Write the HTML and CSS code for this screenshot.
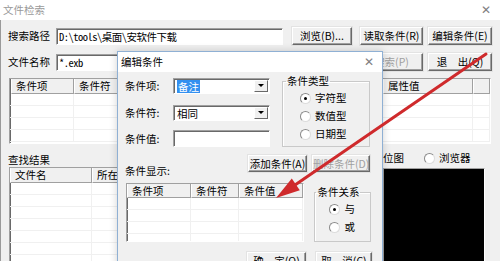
FILE: index.html
```html
<!DOCTYPE html>
<html lang="zh-CN">
<head>
<meta charset="UTF-8">
<meta name="viewport" content="width=device-width, initial-scale=1.0">
<title>文件检索</title>
<link rel="stylesheet" href="styles.css">
</head>
<body>

<section class="window">
    <div class="titlebar">
        <span class="title">文件检索</span>
        <span class="close">✕</span>
    </div>
    <div class="main">
        <div class="row">
            <span class="row-label">搜索路径</span>
            <div class="field mono">D:\tools\桌面\安软件下载</div>
            <button class="btn btn-browse">浏览(B)...</button>
            <button class="btn btn-read">读取条件(R)</button>
            <button class="btn btn-edit">编辑条件(E)</button>
        </div>
        <div class="row row-second">
            <span class="row-label">文件名称</span>
            <div class="field mono">*.exb</div>
            <button class="btn btn-search" disabled>搜索(P)</button>
            <button class="btn btn-edit">退　出(Q)</button>
        </div>

        <div class="list list-cond">
            <div class="list-head">
                <span>条件项</span><span>条件符</span><span>条件值</span><span>属性名</span><span>属性值</span><span></span>
            </div>
            <div class="list-row"><span></span><span></span><span></span><span></span><span></span><span></span></div>
            <div class="list-row"><span></span><span></span><span></span><span></span><span></span><span></span></div>
            <div class="list-row"><span></span><span></span><span></span><span></span><span></span><span></span></div>
            <div class="list-row"><span></span><span></span><span></span><span></span><span></span><span></span></div>
        </div>

        <div class="results">
            <div class="results-left">
                <div class="section-label">查找结果</div>
                <div class="list list-files">
                    <div class="list-head"><span>文件名</span><span>所在文件夹</span></div>
                    <div class="list-row"><span></span><span></span></div>
                    <div class="list-row"><span></span><span></span></div>
                    <div class="list-row"><span></span><span></span></div>
                    <div class="list-row"><span></span><span></span></div>
                    <div class="list-row"><span></span><span></span></div>
                    <div class="list-row"><span></span><span></span></div>
                    <div class="list-row"><span></span><span></span></div>
                    <div class="list-row"><span></span><span></span></div>
                </div>
            </div>
            <div class="results-right">
                <div class="view-mode">
                    <span>位图</span>
                    <span class="radio-item"><i class="radio"></i>浏览器</span>
                </div>
                <div class="preview"></div>
            </div>
        </div>
    </div>
</section>

<section class="dialog">
    <div class="titlebar dialog-titlebar">
        <span class="dialog-title">编辑条件</span>
        <span class="close">✕</span>
    </div>
    <div class="dialog-body">
        <div class="dialog-top">
            <div class="fields">
                <div class="field-row">
                    <span class="field-label">条件项:</span>
                    <div class="combo"><span class="selected">备注</span><i class="combo-arrow"></i></div>
                </div>
                <div class="field-row field-row-2">
                    <span class="field-label">条件符:</span>
                    <div class="combo"><span>相同</span><i class="combo-arrow"></i></div>
                </div>
                <div class="field-row field-row-3">
                    <span class="field-label">条件值:</span>
                    <div class="field field-value"></div>
                </div>
            </div>
            <fieldset class="group group-type">
                <legend>条件类型</legend>
                <span class="radio-item"><i class="radio checked"></i>字符型</span>
                <span class="radio-item"><i class="radio"></i>数值型</span>
                <span class="radio-item"><i class="radio"></i>日期型</span>
            </fieldset>
        </div>

        <div class="dialog-actions">
            <span class="show-label">条件显示:</span>
            <button class="btn btn-add">添加条件(A)</button>
            <button class="btn btn-del" disabled>删除条件(D)</button>
        </div>

        <div class="dialog-bottom">
            <div class="list list-show">
                <div class="list-head"><span>条件项</span><span>条件符</span><span>条件值</span></div>
                <div class="list-row"><span></span><span></span><span></span></div>
                <div class="list-row"><span></span><span></span><span></span></div>
                <div class="list-row"><span></span><span></span><span></span></div>
                <div class="list-row"><span></span><span></span><span></span></div>
            </div>
            <fieldset class="group group-rel">
                <legend>条件关系</legend>
                <span class="radio-item"><i class="radio checked"></i>与</span>
                <span class="radio-item"><i class="radio"></i>或</span>
            </fieldset>
        </div>

        <div class="dialog-buttons">
            <button class="btn btn-ok">确　定(O)</button>
            <button class="btn btn-cancel">取　消(C)</button>
        </div>
    </div>
</section>

<svg class="arrow" width="500" height="261" viewBox="0 0 500 261">
    <line x1="486" y1="54" x2="295" y2="185" stroke="#cf2a2c" stroke-width="3" stroke-linecap="round"/>
    <polygon points="276,198 299.8,190.2 291.8,178.6" fill="#cf2a2c"/>
</svg>

</body>
</html>
```

FILE: styles.css
```css
body {
    margin: 0;
    width: 500px;
    height: 261px;
    overflow: hidden;
    position: relative;
    background-color: #f0f0f0;
    font-family: "Noto Sans CJK SC", "Noto Sans", sans-serif;
    font-size: 10.5px;
    line-height: 14px;
    color: #000;
}

/* ---------- window frame ---------- */

.titlebar {
    height: 20px;
    background-color: #fff;
    display: flex;
    align-items: center;
    justify-content: space-between;
    padding: 0 9px 0 3px;
}

.title {
    color: #9a9a9a;
}

.close {
    color: #808080;
    font-size: 12px;
    font-family: "DejaVu Sans", sans-serif;
}

.main {
    height: 241px;
    border-left: 1px solid #9a9a9a;
    padding: 7px 8px 0 7px;
}

.row {
    display: flex;
    align-items: center;
    height: 18px;
}

.row-second {
    margin-top: 8px;
}

.row-label {
    width: 48px;
    flex: none;
}

/* ---------- controls ---------- */

.field {
    box-sizing: border-box;
    height: 17px;
    width: 227px;
    flex: none;
    background-color: #fff;
    border: 1px solid;
    border-color: #a0a0a0 #fff #fff #a0a0a0;
    box-shadow: inset 1px 1px #696969;
    padding: 0 2px;
    line-height: 15px;
    white-space: nowrap;
    overflow: hidden;
}

.mono {
    font-family: "Noto Sans Mono CJK SC", "Liberation Mono", "Noto Sans CJK SC", monospace;
    letter-spacing: -0.5px;
}

.btn {
    box-sizing: border-box;
    height: 18px;
    flex: none;
    padding: 0;
    font: inherit;
    line-height: 14px;
    color: #000;
    background-color: #f0f0f0;
    border: 1px solid;
    border-color: #fff #696969 #696969 #fff;
    box-shadow: inset -1px -1px #a0a0a0, 0 0 0 1px #e3e3e3;
    white-space: nowrap;
}

.btn:disabled {
    color: #a0a0a0;
}

.btn-browse { width: 60px; margin-left: 9px; }
.btn-read   { width: 63px; margin-left: 8px; }
.btn-edit   { width: 64px; margin-left: 5px; }
.btn-search { width: 63px; margin-left: 77px; }

/* ---------- list views ---------- */

.list {
    box-sizing: border-box;
    background-color: #fff;
    border: 1px solid;
    border-color: #a0a0a0 #fff #fff #a0a0a0;
    box-shadow: inset 1px 1px #696969;
    overflow: hidden;
}

.list-head,
.list-row {
    display: grid;
}

.list-head span {
    box-sizing: border-box;
    height: 15px;
    padding-left: 4px;
    line-height: 14px;
    background-color: #f0f0f0;
    border-right: 1px solid #a0a0a0;
    border-bottom: 1px solid #a0a0a0;
    border-left: 1px solid #fff;
    white-space: nowrap;
    overflow: hidden;
}

.list-row span {
    height: 11px;
    border-right: 1px solid #f0f0f0;
    border-bottom: 1px solid #f0f0f0;
}

.list-cond {
    margin: 7px 1px 0 1px;
    height: 66px;
}

.list-cond .list-head,
.list-cond .list-row {
    grid-template-columns: 64px 70px 80px 159px 90px 1fr;
}

.list-cond .list-head span:first-child {
    margin-left: 1px;
}

.results {
    display: flex;
    gap: 3px;
    margin-top: 9px;
}

.results-left {
    width: 372px;
    flex: none;
}

.section-label {
    height: 14px;
}

.list-files {
    margin-left: 1px;
    height: 100px;
}

.list-files .list-head,
.list-files .list-row {
    grid-template-columns: 82px 1fr;
}

.results-right {
    width: 109px;
}

.view-mode {
    display: flex;
    align-items: center;
    gap: 20px;
    height: 14px;
    margin-top: -2px;
}

.preview {
    box-sizing: border-box;
    width: 102px;
    height: 100px;
    margin-top: 3px;
    background-color: #000;
    border: 1px solid;
    border-color: #a0a0a0 #fff #fff #a0a0a0;
}

/* ---------- radios ---------- */

.radio-item {
    display: flex;
    align-items: center;
    gap: 4px;
    height: 18px;
}

.radio {
    box-sizing: border-box;
    width: 11px;
    height: 11px;
    border-radius: 50%;
    border: 1px solid #8a8a8a;
    border-right-color: #dcdcdc;
    border-bottom-color: #dcdcdc;
    background-color: #fff;
    position: relative;
}

.radio.checked::after {
    content: "";
    position: absolute;
    left: 3px;
    top: 3px;
    width: 3px;
    height: 3px;
    border-radius: 50%;
    background-color: #000;
}

.view-mode .radio-item {
    height: 14px;
}

/* ---------- dialog ---------- */

.dialog {
    position: absolute;
    left: 117px;
    top: 51px;
    box-sizing: border-box;
    width: 266px;
    height: 232px;
    background-color: #f0f0f0;
    border: 1px solid #8fb0d4;
    box-shadow: 0 0 8px rgba(0, 0, 0, 0.18);
}

.dialog-titlebar {
    padding: 0 8px 0 3px;
}

.dialog-body {
    padding: 2px 11px 0 7px;
}

.dialog-top {
    display: flex;
    gap: 12px;
    align-items: flex-start;
}

.fields {
    width: 145px;
    padding-top: 4px;
}

.field-row {
    display: flex;
    align-items: center;
    height: 16px;
}

.field-row-2 {
    margin-top: 11px;
}

.field-row-3 {
    margin-top: 9px;
    height: 17px;
}

.field-label {
    width: 48px;
    flex: none;
}

.combo {
    box-sizing: border-box;
    width: 97px;
    height: 16px;
    display: flex;
    align-items: center;
    justify-content: space-between;
    background-color: #fff;
    border: 1px solid;
    border-color: #a0a0a0 #fff #fff #a0a0a0;
    box-shadow: inset 1px 1px #696969;
    padding: 1px 1px 1px 3px;
    line-height: 13px;
}

.selected {
    background-color: #3390f0;
    color: #fff;
    padding: 0 1px;
}

.combo-arrow {
    box-sizing: border-box;
    width: 14px;
    height: 12px;
    background-color: #f0f0f0;
    border: 1px solid;
    border-color: #fff #696969 #696969 #fff;
    position: relative;
}

.combo-arrow::after {
    content: "";
    position: absolute;
    left: 3px;
    top: 3px;
    border-left: 3px solid transparent;
    border-right: 3px solid transparent;
    border-top: 3px solid #000;
}

.field-value {
    width: 97px;
    height: 17px;
}

.group {
    box-sizing: border-box;
    margin: 0;
    padding: 1px 0 0 0;
    border: 1px solid #c9c9c9;
    box-shadow: inset 1px 1px #fff;
    min-width: 0;
}

.group legend {
    padding: 0 1px;
    margin-left: 3px;
    line-height: 14px;
    white-space: nowrap;
}

.group-type {
    width: 88px;
    height: 73px;
}

.group-type .radio-item {
    margin-left: 17px;
}

.dialog-actions {
    display: flex;
    height: 23px;
    margin-top: 8px;
    gap: 5px;
}

.show-label {
    flex: 1;
    align-self: flex-end;
}

.btn-add { width: 59px; height: 17px; }
.btn-del { width: 58px; height: 17px; margin-right: 1px; }

.dialog-bottom {
    display: flex;
    gap: 10px;
    margin-top: 5px;
}

.list-show {
    width: 180px;
    height: 59px;
    margin-left: 1px;
}

.list-show .list-head,
.list-show .list-row {
    grid-template-columns: 64px 48px 1fr;
}

.list-show .list-head span {
    height: 14px;
    line-height: 13px;
}

.group-rel {
    width: 57px;
    height: 57px;
    margin-top: 2px;
}

.group-rel legend {
    margin-left: 1px;
}

.group-rel .radio-item {
    margin-left: 14px;
}

.dialog-buttons {
    display: flex;
    justify-content: flex-end;
    gap: 10px;
    margin-top: 10px;
    margin-right: -1px;
}

.btn-ok     { width: 59px; }
.btn-cancel { width: 56px; }

/* ---------- annotation ---------- */

.arrow {
    position: absolute;
    left: 0;
    top: 0;
    pointer-events: none;
}
```
